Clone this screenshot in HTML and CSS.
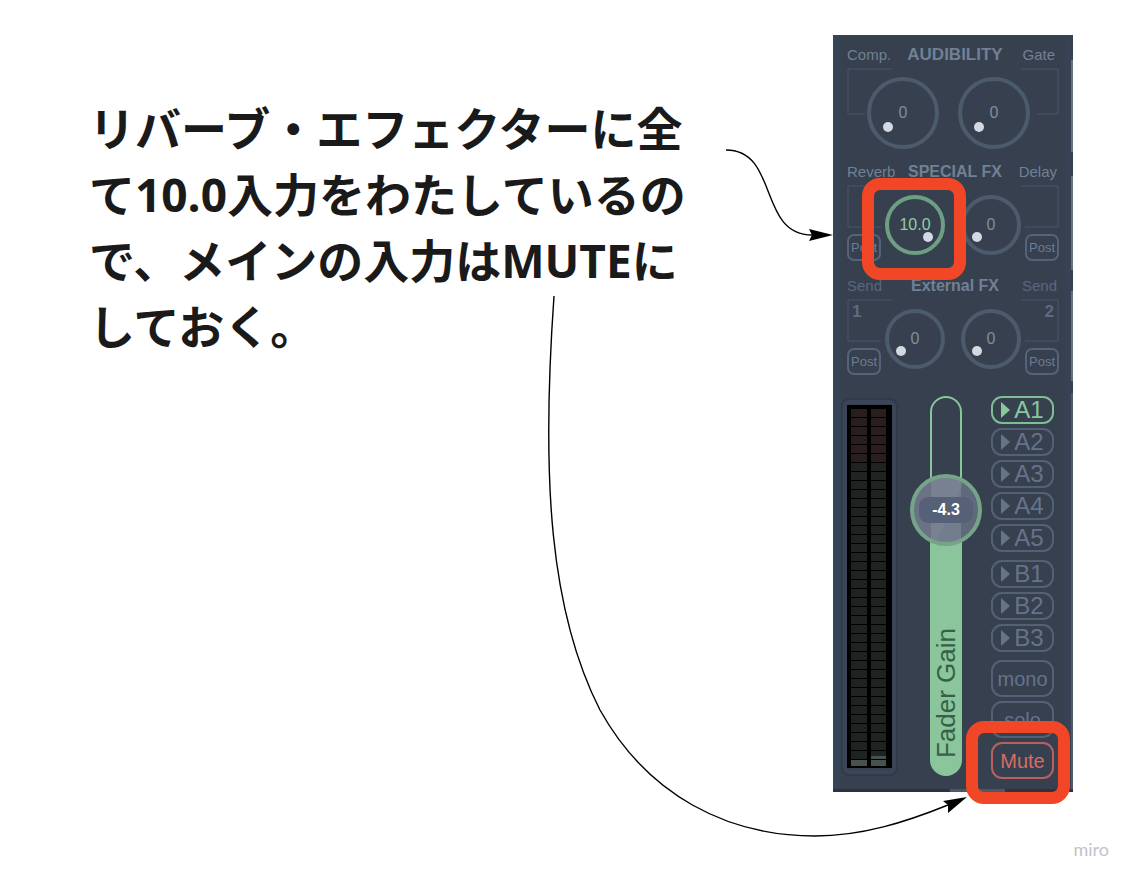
FILE: index.html
```html
<!DOCTYPE html>
<html lang="ja">
<head>
<meta charset="utf-8">
<meta name="viewport" content="width=device-width, initial-scale=1">
<title>リバーブ・エフェクター</title>
<link rel="stylesheet" href="styles.css">
</head>
<body>
<main class="board">
  <p class="note">リバーブ・エフェクターに全て10.0入力をわたしているので、メインの入力はMUTEにしておく。</p>

  <section class="strip" aria-label="Channel strip">
    <section class="fx fx-large">
      <header class="fx-head"><span>Comp.</span><h2>AUDIBILITY</h2><span>Gate</span></header>
      <div class="fx-body">
        <svg class="bracket" viewBox="0 0 212 50" aria-hidden="true"><path d="M45 1H1V46H18M174 1H211V46H190"/></svg>
        <div class="knob"><input type="range" min="0" max="10" value="0" aria-label="Comp."><output>0</output><i class="dot"></i></div>
        <div class="knob"><input type="range" min="0" max="10" value="0" aria-label="Gate"><output>0</output><i class="dot"></i></div>
      </div>
    </section>

    <section class="fx">
      <header class="fx-head"><span>Reverb</span><h2>SPECIAL FX</h2><span>Delay</span></header>
      <div class="fx-body">
        <svg class="bracket" viewBox="0 0 212 50" aria-hidden="true"><path d="M45 1H1V42H34M174 1H211V42H178"/></svg>
        <div class="side"><button class="post" type="button">Post</button></div>
        <div class="knob knob-on"><input type="range" min="0" max="10" value="10" aria-label="Reverb"><output>10.0</output><i class="dot"></i></div>
        <div class="knob"><input type="range" min="0" max="10" value="0" aria-label="Delay"><output>0</output><i class="dot"></i></div>
        <div class="side"><button class="post" type="button">Post</button></div>
      </div>
    </section>

    <section class="fx">
      <header class="fx-head fx-dim"><span>Send</span><h2>External FX</h2><span>Send</span></header>
      <div class="fx-body">
        <svg class="bracket" viewBox="0 0 212 50" aria-hidden="true"><path d="M45 1H1V42H34M174 1H211V42H178"/></svg>
        <div class="side"><b>1</b><button class="post" type="button">Post</button></div>
        <div class="knob"><input type="range" min="0" max="10" value="0" aria-label="Send 1"><output>0</output><i class="dot"></i></div>
        <div class="knob"><input type="range" min="0" max="10" value="0" aria-label="Send 2"><output>0</output><i class="dot"></i></div>
        <div class="side side-right"><b>2</b><button class="post" type="button">Post</button></div>
      </div>
    </section>

    <div class="mix">
      <div class="meter" role="img" aria-label="Level">
        <div class="bar"></div>
        <div class="bar bar-peak"></div>
      </div>
      <div class="fader">
        <input id="gain" type="range" min="-60" max="12" step="0.1" value="-4.3">
        <label for="gain">Fader Gain</label>
        <output class="cap" for="gain"><span>-4.3</span></output>
      </div>
      <div class="routes">
        <div class="group">
          <button class="route on" type="button"><i></i>A1</button>
          <button class="route" type="button"><i></i>A2</button>
          <button class="route" type="button"><i></i>A3</button>
          <button class="route" type="button"><i></i>A4</button>
          <button class="route" type="button"><i></i>A5</button>
        </div>
        <div class="group">
          <button class="route" type="button"><i></i>B1</button>
          <button class="route" type="button"><i></i>B2</button>
          <button class="route" type="button"><i></i>B3</button>
        </div>
        <div class="group modes">
          <button class="mode" type="button">mono</button>
          <button class="mode" type="button">solo</button>
          <button class="mode mute" type="button">Mute</button>
        </div>
      </div>
    </div>
  </section>

  <div class="mark mark-reverb"></div>
  <div class="mark mark-mute"></div>

  <svg class="arrows" width="1134" height="881" viewBox="0 0 1134 881" aria-hidden="true">
    <path class="line" d="M726 150C779 150 758 235 812 235"/>
    <path d="M833 235L809 229L812 235L809 241Z"/>
    <path class="line" d="M554 296C541 480 550 612 600 710C648 796 728 836 815 836C862 836 906 822 948 805"/>
    <path d="M967 797L943 801L948 805L948 813Z"/>
  </svg>

  <span class="brand">miro</span>
</main>
</body>
</html>
```
FILE: styles.css
```css
* { box-sizing: border-box; }

body {
  margin: 0;
  background: #fff;
  font-family: "Liberation Sans", Arial, sans-serif;
}

.board {
  position: relative;
  min-height: 881px;
  overflow: hidden;
}

.note {
  position: absolute;
  left: 89px;
  top: 95px;
  width: 606px;
  margin: 0;
  color: #1a1a1a;
  font: bold 46px/66px "Open Sans", "Noto Sans CJK JP", sans-serif;
  line-break: anywhere;
}

/* Channel strip */
.strip {
  position: absolute;
  left: 833px;
  top: 35px;
  width: 240px;
  padding: 10px 0 13px;
  background:
    linear-gradient(90deg, #2b323e 117px, #4d5765 117px 172px, #352f38 172px) bottom / 100% 3px no-repeat,
    linear-gradient(#37404f 25px, #667182 25px 117px, #37404f 117px 141px, #667182 141px 235px, #37404f 235px 256px, #667182 256px 346px, #37404f 346px 358px, #4f5b6c 358px) right / 2px 100% no-repeat,
    linear-gradient(90deg, #34465a 0, #37404f 10px, #37404f 230px, #374558 100%);
  color: #708095;
}

.fx { height: 114px; padding: 0 14px; }
.fx-large { height: 117px; }

.fx-head {
  display: grid;
  grid-template-columns: 1fr auto 1fr;
  height: 20px;
  padding-right: 2px;
  font-size: 15px;
  line-height: 20px;
  white-space: nowrap;
}
.fx-large .fx-head { padding-right: 4px; }
.fx-head span:last-child { text-align: right; }
.fx-head h2 { margin: 0; padding-left: 6px; font-size: 16px; line-height: 20px; }
.fx-large h2 { padding-left: 8px; font-size: 17px; }
.fx-dim span { color: #59687e; }

.fx-body {
  position: relative;
  display: flex;
  justify-content: space-between;
  gap: 4px;
  height: 79px;
}
.fx-large .fx-body {
  justify-content: flex-start;
  gap: 19px;
  padding: 12px 20px 0;
}
.bracket {
  position: absolute;
  left: 0;
  top: 3px;
  width: 100%;
  fill: none;
  stroke: #48566a;
}

.side {
  position: relative;
  display: flex;
  flex-direction: column;
  width: 34px;
  padding-top: 6px;
}
.side b { padding: 0 5px; font-size: 17px; line-height: 20px; color: #5d6b80; }
.side-right b { text-align: right; }
.post {
  width: 34px;
  height: 27px;
  margin-top: auto;
  padding: 0;
  border: 2px solid #54627a;
  border-radius: 7px;
  background: none;
  color: #6d7b91;
  font: 13px "Liberation Sans", Arial, sans-serif;
}

.knob {
  position: relative;
  width: 60px;
  height: 60px;
  margin-top: 13px;
}
.knob + .knob { margin-left: 12px; }
.fx-large .knob { width: 72px; height: 72px; margin: 0; }
.knob input {
  display: block;
  width: 100%;
  height: 100%;
  margin: 0;
  appearance: none;
  background: transparent;
  border: 4px solid #4b5b6c;
  border-radius: 50%;
}
.knob input::-webkit-slider-thumb { appearance: none; width: 1px; height: 1px; }
.knob output {
  position: absolute;
  inset: 0;
  display: grid;
  place-items: center;
  color: #7f8da0;
  font-size: 16px;
}
.dot {
  position: absolute;
  left: 11px;
  top: 37px;
  width: 10px;
  height: 10px;
  border-radius: 50%;
  background: #d3d9e2;
}
.fx-large .dot { left: 16px; top: 45px; }
.knob-on input { border-color: #6da083; }
.knob-on output { color: #8fcfa2; }
.knob-on .dot { left: 38px; }

/* Meter, fader and routing */
.mix {
  display: flex;
  justify-content: space-between;
  align-items: flex-start;
  padding: 6px 19px 0 8px;
}

.meter {
  display: flex;
  gap: 4px;
  width: 57px;
  height: 378px;
  margin-top: 2px;
  padding: 9px 10px 8px 8px;
  border: 2px solid #2f3a4d;
  border-radius: 8px;
  box-shadow: inset 0 0 0 4px #3a4658;
  background: linear-gradient(#000, #000) 4px 5px / 45px 363px no-repeat;
}
.bar {
  flex: 1;
  background:
    repeating-linear-gradient(transparent 0 8px, #000 8px 9px),
    linear-gradient(#2b1e1f 0 54px, #1f2422 54px 351px, #465250 351px);
}
.bar-peak {
  background:
    repeating-linear-gradient(transparent 0 8px, #000 8px 9px),
    linear-gradient(#2b1e1f 0 54px, #1f2422 54px 347px, #465250 347px);
}

.fader {
  position: relative;
  width: 32px;
  height: 380px;
  margin-left: 3px;
}
.fader input {
  display: block;
  width: 100%;
  height: 100%;
  margin: 0;
  appearance: none;
  writing-mode: vertical-lr;
  direction: rtl;
  border: 2px solid #87c79a;
  border-radius: 16px;
  background: linear-gradient(transparent 30%, #8ac59b 30%);
}
.fader input::-webkit-slider-thumb { appearance: none; width: 1px; height: 1px; }
.fader label {
  position: absolute;
  left: 0;
  bottom: 18px;
  width: 32px;
  color: #386048;
  font-size: 26px;
  line-height: 32px;
  white-space: nowrap;
  writing-mode: vertical-rl;
  transform: rotate(180deg);
}
.cap {
  position: absolute;
  left: -20px;
  top: 78px;
  display: grid;
  place-items: center;
  width: 72px;
  height: 72px;
  border: 4px solid #76a488;
  border-radius: 50%;
  background:
    linear-gradient(90deg, transparent 17px, #8591a080 17px 47px, transparent 47px),
    linear-gradient(115deg, #6b7285 55%, #5f697b 55%);
  color: #fff;
  font-size: 16px;
  font-weight: bold;
}
.cap span {
  width: 54px;
  border-radius: 9px;
  background: #566177;
  line-height: 26px;
  text-align: center;
}

.routes { display: flex; flex-direction: column; gap: 8px; width: 63px; }
.group { display: flex; flex-direction: column; gap: 4px; }
.route, .mode {
  display: flex;
  align-items: center;
  justify-content: center;
  gap: 4px;
  height: 28px;
  padding: 0;
  border: 2px solid #536176;
  border-radius: 11px;
  background: none;
  color: #65738a;
  font: 24px/24px "Liberation Sans", Arial, sans-serif;
}
.route i {
  border: solid transparent;
  border-width: 8px 0 8px 9px;
  border-left-color: currentColor;
}
.route.on { border-color: #7fbd93; color: #86c99b; }
.mode { height: 37px; font-size: 20px; }
.mode.mute { border-color: #b9605f; color: #d96c66; }

/* Callouts */
.mark {
  position: absolute;
  border: 12px solid #f24726;
  border-radius: 18px;
}
.mark-reverb { left: 862px; top: 178px; width: 104px; height: 102px; }
.mark-mute { left: 966px; top: 721px; width: 104px; height: 83px; }

.arrows { position: absolute; left: 0; top: 0; pointer-events: none; }
.line { fill: none; stroke: #000; stroke-width: 1.4; }

.brand {
  position: absolute;
  right: 25px;
  bottom: 20px;
  color: #c3c3c9;
  font: 18px/24px Lato, sans-serif;
}
```
